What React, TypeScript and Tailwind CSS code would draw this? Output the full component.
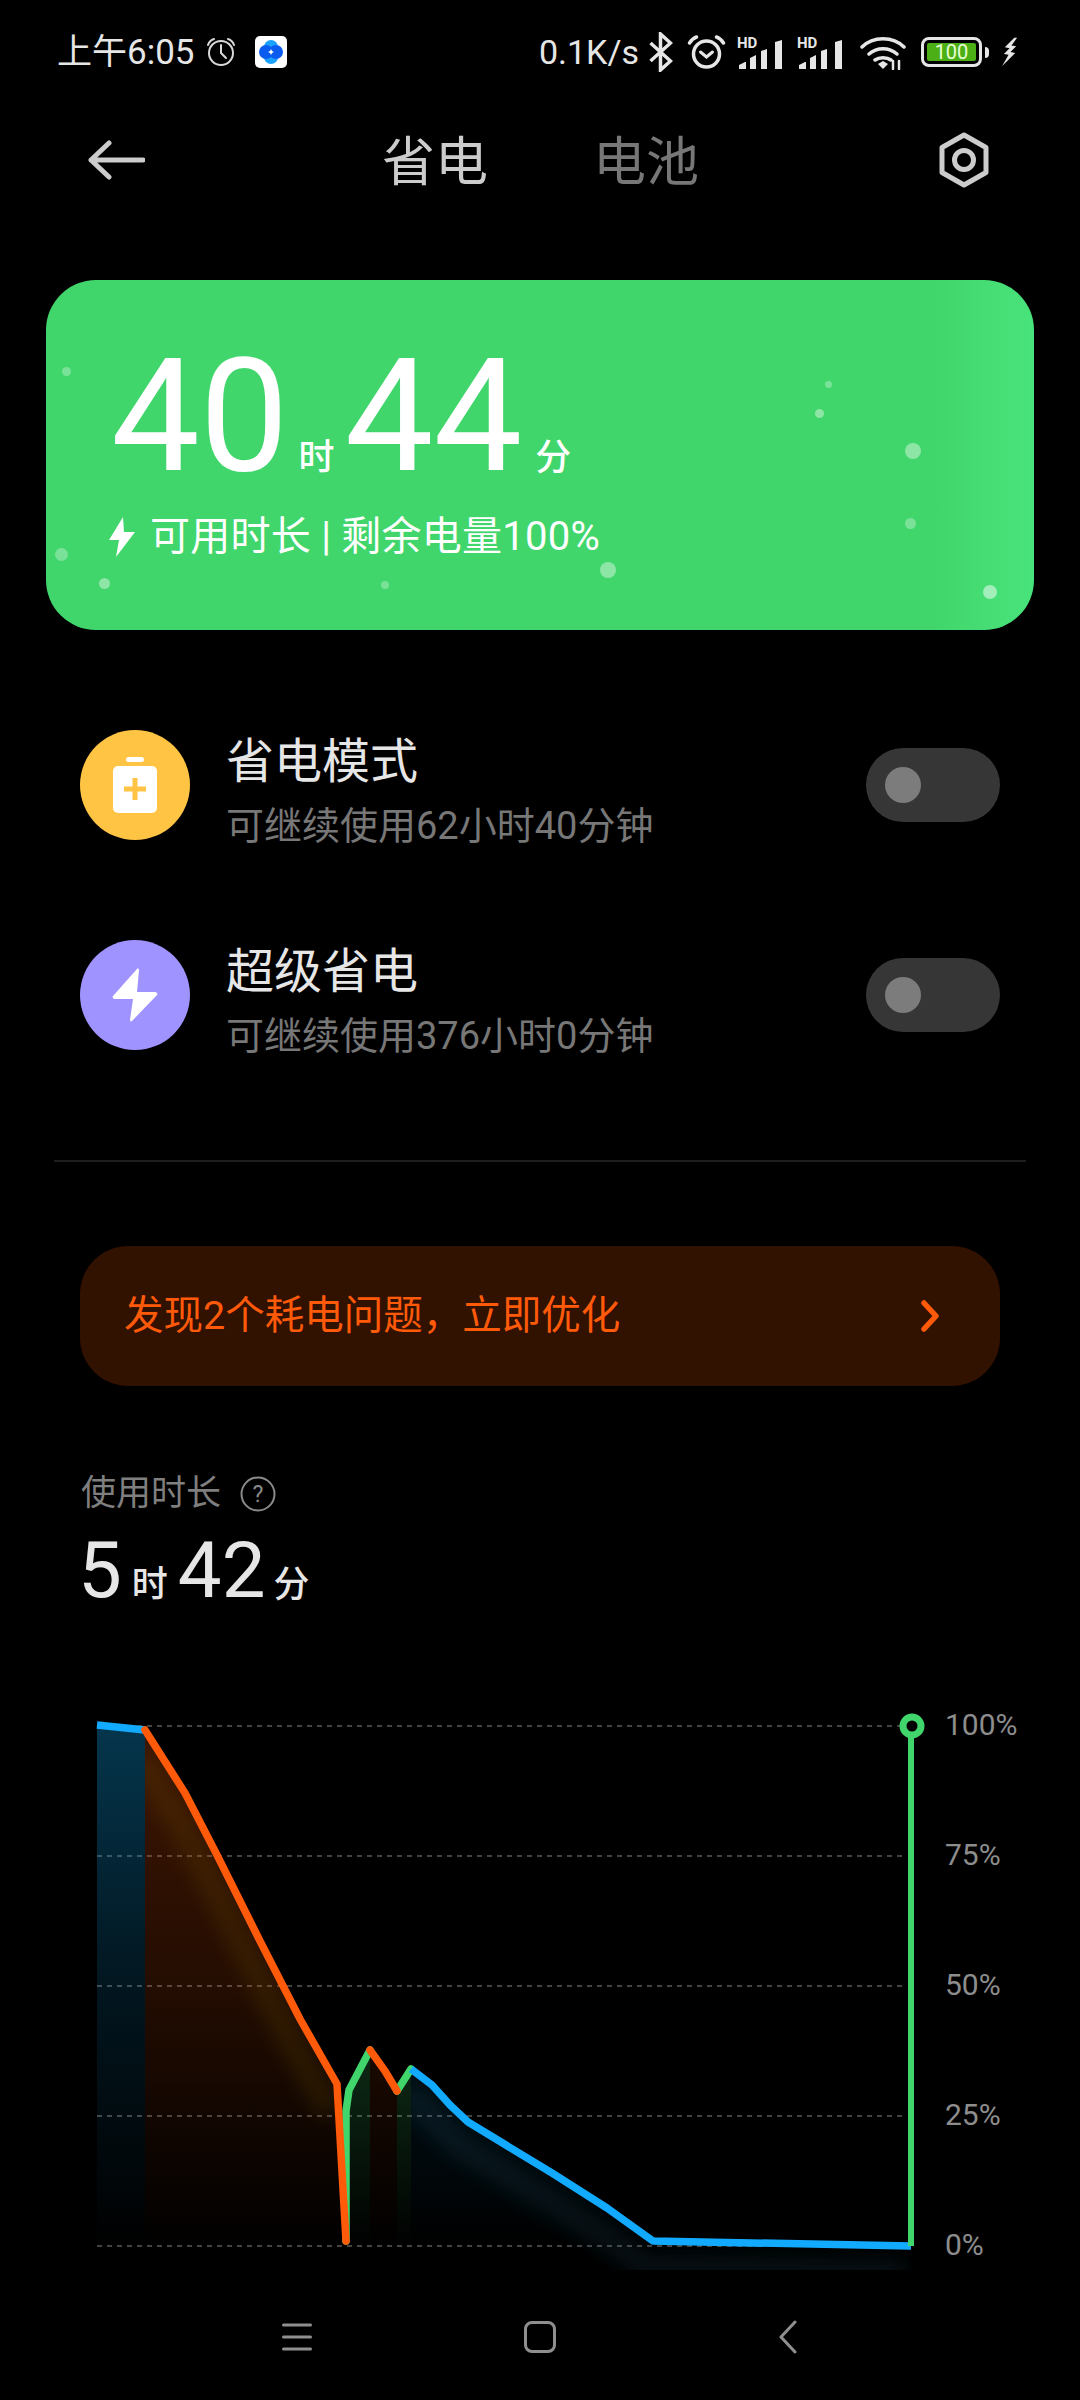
type Point = [number, number];

const blueA: Point[] = [[97, 1725], [145, 1730]];
const orangeA: Point[] = [[145, 1730], [185, 1793], [217, 1855], [260, 1941], [300, 2019], [337, 2084], [346, 2241]];
const greenA: Point[] = [[346, 2241], [346, 2111], [349, 2090], [370, 2050]];
const orangeB: Point[] = [[370, 2050], [385, 2071], [397, 2091]];
const greenB: Point[] = [[397, 2091], [411, 2069]];
const blueB: Point[] = [[411, 2069], [432, 2085], [450, 2105], [468, 2122], [552, 2173], [607, 2208], [653, 2241], [911, 2246]];

const line = (pts: Point[]) => pts.map(([x, y], i) => `${i ? "L" : "M"}${x} ${y}`).join(" ");
const area = (pts: Point[]) =>
  `${line(pts)} L${pts[pts.length - 1][0]} 2270 L${pts[0][0]} 2270 Z`;

const dots = [
  { x: 66, y: 371, d: 9, o: "opacity-30" },
  { x: 828, y: 384, d: 7, o: "opacity-30" },
  { x: 819, y: 413, d: 9, o: "opacity-40" },
  { x: 913, y: 451, d: 16, o: "opacity-40" },
  { x: 910, y: 523, d: 11, o: "opacity-30" },
  { x: 61, y: 554, d: 13, o: "opacity-30" },
  { x: 104, y: 583, d: 11, o: "opacity-40" },
  { x: 385, y: 585, d: 8, o: "opacity-30" },
  { x: 608, y: 570, d: 16, o: "opacity-40" },
  { x: 990, y: 592, d: 14, o: "opacity-50" },
];

function Signal() {
  return (
    <svg width="50" height="38" viewBox="0 0 50 38">
      <text x="0" y="15" fontSize="15" fontWeight="700" fill="#e6e6e6" fontFamily="Roboto">HD</text>
      <path d="M2 36v-4l6-3h1v7zM13 36V25l6-3v14zM24 36V18l6-2v20zM38 36V9l7-2v29z" fill="#e6e6e6" />
    </svg>
  );
}

function Chart() {
  return (
    <svg width="930" height="640" viewBox="0 1660 930 640" className="shrink-0">
      <defs>
        <linearGradient id="blueFill" gradientUnits="userSpaceOnUse" x1="0" y1="1725" x2="0" y2="2250">
          <stop offset="0" stopColor="#0fa8f0" stopOpacity="0.32" />
          <stop offset="0.5" stopColor="#0fa8f0" stopOpacity="0.13" />
          <stop offset="1" stopColor="#0fa8f0" stopOpacity="0" />
        </linearGradient>
        <linearGradient id="orangeFill" gradientUnits="userSpaceOnUse" x1="0" y1="1725" x2="0" y2="2250">
          <stop offset="0" stopColor="#ff5a0a" stopOpacity="0.24" />
          <stop offset="0.5" stopColor="#ff5a0a" stopOpacity="0.14" />
          <stop offset="1" stopColor="#ff5a0a" stopOpacity="0" />
        </linearGradient>
        <linearGradient id="greenFill" gradientUnits="userSpaceOnUse" x1="0" y1="2050" x2="0" y2="2250">
          <stop offset="0" stopColor="#41d66c" stopOpacity="0.2" />
          <stop offset="1" stopColor="#41d66c" stopOpacity="0" />
        </linearGradient>
        <filter id="soft" x="-20%" y="-20%" width="140%" height="140%">
          <feGaussianBlur stdDeviation="9" />
        </filter>
        <clipPath id="underOrange"><path d={area(orangeA)} /></clipPath>
        <clipPath id="underBlue"><path d={area(blueB)} /></clipPath>
      </defs>

      {[1726, 1856, 1986, 2116, 2246].map((y) => (
        <line key={y} x1="97" x2="905" y1={y} y2={y} stroke="#5a5a5a" strokeWidth="1.5" strokeDasharray="5 5" />
      ))}

      <path d={area(blueA)} fill="url(#blueFill)" />
      <path d={area(orangeA)} fill="url(#orangeFill)" />
      <path d={area(greenA)} fill="url(#greenFill)" />
      <path d={area(orangeB)} fill="url(#orangeFill)" />
      <path d={area(greenB)} fill="url(#greenFill)" />
      <path d={area(blueB)} fill="url(#blueFill)" />

      <g clipPath="url(#underOrange)">
        <path d={line(orangeA.slice(0, 6))} transform="translate(-6 28)" fill="none" stroke="#8a6a10" strokeOpacity="0.16" strokeWidth="26" filter="url(#soft)" />
      </g>
      <g clipPath="url(#underBlue)">
        <path d={line(blueB)} transform="translate(-6 26)" fill="none" stroke="#2a7a9a" strokeOpacity="0.12" strokeWidth="26" filter="url(#soft)" />
      </g>
      <path d="M346 2130 L346 2262" stroke="#41d66c" strokeOpacity="0.3" strokeWidth="20" filter="url(#soft)" />

      <g fill="none" strokeWidth="7.5" strokeLinejoin="round" strokeLinecap="round">
        <path d={line(blueA)} stroke="#12aaff" strokeLinecap="butt" />
        <path d={line(greenA)} stroke="#41d66c" />
        <path d={line(orangeA)} stroke="#ff5a0a" />
        <path d={line(greenB)} stroke="#41d66c" />
        <path d={line(orangeB)} stroke="#ff5a0a" />
        <path d={line(blueB)} stroke="#12aaff" strokeLinecap="butt" />
      </g>
      <path d="M911 1735 L911 2246" stroke="#41d66c" strokeWidth="6" />
      <circle cx="912" cy="1726" r="9" fill="#000" stroke="#41d66c" strokeWidth="7" />
    </svg>
  );
}

function Toggle() {
  return (
    <div className="ml-auto flex h-[74px] w-[134px] shrink-0 items-center rounded-full bg-[#363636] pl-[19px]">
      <div className="size-[36px] rounded-full bg-[#7c7c7c]" />
    </div>
  );
}

function Row({ title, sub, color, icon, className }: { title: string; sub: string; color: string; icon: React.ReactNode; className: string }) {
  return (
    <div className={`flex h-[110px] items-center pr-[80px] pl-[80px] ${className}`}>
      <div className={`flex size-[110px] shrink-0 items-center justify-center rounded-full ${color}`}>{icon}</div>
      <div className="mt-[13px] ml-[36px] flex flex-col">
        <span className="text-[48px] leading-[56px] text-[#e6e6e6]">{title}</span>
        <span className="mt-[13px] text-[38px] leading-[46px] text-[#777777]">{sub}</span>
      </div>
      <Toggle />
    </div>
  );
}

export default function App() {
  return (
    <div className="flex h-[2400px] w-[1080px] flex-col overflow-hidden bg-black font-[Roboto,'Noto_Sans_CJK_SC',sans-serif]">
      {/* Status bar */}
      <div className="flex h-[104px] items-center pr-[61px] pl-[57px] text-[#e6e6e6]">
        <span className="text-[35px] leading-none">上午6:05</span>
        <svg width="32" height="32" viewBox="0 0 32 32" className="ml-[10px]" fill="none" stroke="#d8d8d8" strokeWidth="2" strokeLinecap="round">
          <circle cx="16" cy="17" r="12" />
          <path d="M16 9v8l5 5M3 9c1-3 3-5 6-6M29 9c-1-3-3-5-6-6" />
        </svg>
        <div className="ml-[18px] flex size-[32px] items-center justify-center rounded-[5px] bg-white">
          <svg width="26" height="26" viewBox="0 0 26 26">
            <circle cx="13" cy="8" r="7" fill="#1aa0ff" />
            <circle cx="13" cy="18" r="7" fill="#1aa0ff" />
            <circle cx="8" cy="13" r="7" fill="#0a5cf0" />
            <circle cx="18" cy="13" r="7" fill="#0a5cf0" />
            <path d="M13 10l1 2 2 1-2 1-1 2-1-2-2-1 2-1z" fill="#fff" />
          </svg>
        </div>
        <span className="ml-auto text-[34px] leading-none">0.1K/s</span>
        <svg width="25" height="40" viewBox="0 0 24 40" className="ml-[9px]" fill="none" stroke="#e6e6e6" strokeWidth="3.5">
          <path d="M2 11l20 18-10 9V2l10 9L2 29" />
        </svg>
        <svg width="39" height="36" viewBox="0 0 38 36" className="ml-[14px]" fill="none" stroke="#e6e6e6" strokeWidth="3.5" strokeLinecap="round">
          <circle cx="19" cy="20" r="13" />
          <path d="M13 18l6 5 6-5" strokeWidth="3" />
          <path d="M2 9c2-3 4-5 7-6M36 9c-2-3-4-5-7-6" />
        </svg>
        <div className="ml-[11px]"><Signal /></div>
        <div className="ml-[10px]"><Signal /></div>
        <svg width="46" height="36" viewBox="0 0 46 36" className="ml-[13px]" fill="none" stroke="#e6e6e6" strokeWidth="3.5" strokeLinecap="round">
          <path d="M2 13C13 2 33 2 44 13M9 20c8-7 20-7 28 0M15 26c4-3 12-3 16 0" />
          <path d="M18 30l5-3 5 3-5 5z" fill="#e6e6e6" stroke="none" />
          <path d="M33 35v-8M39 35v-8" strokeWidth="2.5" />
        </svg>
        <div className="ml-[15px] flex h-[30px] w-[61px] items-center justify-center rounded-[8px] border-[3px] border-[#e6e6e6] p-[3px]">
          <div className="flex h-full w-full items-center justify-center rounded-[2px] bg-[#4caf15] text-[20px] leading-none text-[#e8ffd8]">100</div>
        </div>
        <div className="ml-[3px] h-[11px] w-[4px] rounded-r-full bg-[#e6e6e6]" />
        <svg width="17" height="30" viewBox="0 0 18 30" className="ml-[13px]" fill="#e6e6e6">
          <path d="M13 0L3 10l5 1-6 6 5 1L0 30l14-14-5-1 6-6-5-1 6-8z" />
        </svg>
      </div>

      {/* Header */}
      <div className="flex h-[112px] items-center pr-[91px] pl-[88px]">
        <svg width="57" height="40" viewBox="0 0 57 40" fill="none" stroke="#cccccc" strokeWidth="5" strokeLinecap="round" strokeLinejoin="round">
          <path d="M55 20H3M21 3L3 20l18 17" />
        </svg>
        <span className="mt-[8px] ml-[237px] text-[53px] text-[#cccccc]">省电</span>
        <span className="mt-[8px] ml-[105px] text-[53px] text-[#777777]">电池</span>
        <svg width="50" height="56" viewBox="0 0 50 56" className="ml-auto" fill="none" stroke="#cccccc" strokeWidth="5" strokeLinejoin="round">
          <path d="M25 3l22 12.500v25L25 53 3 40.500v-25z" />
          <circle cx="25" cy="28" r="9.500" />
        </svg>
      </div>

      {/* Time left card */}
      <div className="relative mx-[46px] mt-[64px] h-[350px] overflow-hidden rounded-[50px] bg-gradient-to-r from-[#41d66c] from-90% to-[#49e37b] pt-[61px] pl-[65px] text-white">
        {dots.map((dot) => (
          <div
            key={`${dot.x}-${dot.y}`}
            className={`absolute rounded-full bg-white ${dot.o}`}
            style={{ left: dot.x - 46 - dot.d / 2, top: dot.y - 280 - dot.d / 2, width: dot.d, height: dot.d }}
          />
        ))}
        <div className="flex items-baseline">
          <span className="text-[158px] leading-[150px]">40</span>
          <span className="ml-[10px] text-[36px] leading-none font-medium">时</span>
          <span className="ml-[10px] text-[158px] leading-[150px]">44</span>
          <span className="ml-[13px] text-[36px] leading-none font-medium">分</span>
        </div>
        <div className="mt-[23px] -ml-[3px] flex items-center">
          <svg width="28" height="40" viewBox="0 0 28 40" fill="#ffffff">
            <path d="M15 0L1 23h10L8 40l19-25H16z" />
          </svg>
          <span className="ml-[14px] text-[40px] leading-[46px] tracking-[0.25px]">可用时长 | 剩余电量100%</span>
        </div>
      </div>

      {/* Modes */}
      <Row
        className="mt-[100px]"
        title="省电模式"
        sub="可继续使用62小时40分钟"
        color="bg-[#ffc444]"
        icon={
          <svg width="44" height="56" viewBox="0 0 44 56">
            <rect x="13" y="0" width="18" height="5" rx="2.500" fill="#fff" />
            <rect x="0" y="9" width="44" height="47" rx="5" fill="#fff" />
            <path d="M22 21v22M11 32h22" stroke="#ffc444" strokeWidth="5" />
          </svg>
        }
      />
      <Row
        className="mt-[100px]"
        title="超级省电"
        sub="可继续使用376小时0分钟"
        color="bg-[#9f94ff]"
        icon={
          <svg width="46" height="54" viewBox="0 0 46 54" fill="#fff">
            <path d="M25 1c1-1 2 0 2 1l-2 22h18c2 0 3 2 2 3L20 53c-1 1-2 0-2-1l3-21H3c-2 0-3-2-2-3z" />
          </svg>
        }
      />

      <div className="mx-[54px] mt-[110px] h-[1.500px] bg-[#1e1e1e]" />

      {/* Optimize banner */}
      <div className="mx-[80px] mt-[84px] flex h-[140px] items-center justify-between rounded-[48px] bg-[#311100] pr-[60px] pl-[44px] text-[#ff5a0a]">
        <span className="text-[39.5px]">发现2个耗电问题，立即优化</span>
        <svg width="20" height="32" viewBox="0 0 20 32" fill="none" stroke="#ff5a0a" strokeWidth="5.500" strokeLinecap="round" strokeLinejoin="round">
          <path d="M4 3l12 13L4 29" />
        </svg>
      </div>

      {/* Usage */}
      <div className="mt-[87px] flex items-center pl-[81px]">
        <span className="text-[35px] leading-[42px] text-[#7f7f7f]">使用时长</span>
        <svg width="36" height="36" viewBox="0 0 36 36" className="ml-[19px]">
          <circle cx="18" cy="18" r="16.500" fill="none" stroke="#8a8a8a" strokeWidth="2" />
          <text x="18" y="26" fontSize="23" textAnchor="middle" fill="#8a8a8a" fontFamily="Roboto">?</text>
        </svg>
      </div>
      <div className="mt-[17px] flex items-baseline pl-[78px] text-[#e6e6e6]">
        <span className="text-[78px] leading-[78px] font-[450]">5</span>
        <span className="ml-[10px] text-[36px] leading-none font-medium">时</span>
        <span className="ml-[10px] text-[78px] leading-[78px] font-[450]">42</span>
        <span className="ml-[8px] text-[36px] leading-none font-medium">分</span>
      </div>

      {/* Chart */}
      <div className="mt-[50px] flex">
        <Chart />
        <div className="ml-[15px] flex flex-col">
          {["100%", "75%", "50%", "25%", "0%"].map((label) => (
            <div key={label} className="flex h-[130px] items-center text-[30px] text-[#8d8d8d]">{label}</div>
          ))}
        </div>
      </div>

      {/* Nav bar */}
      <div className="flex flex-1 items-center pb-[36px] pl-[282px]">
        <svg width="30" height="28" viewBox="0 0 30 28" stroke="#8f8f8f" strokeWidth="3" strokeLinecap="round">
          <path d="M1.500 2h27M1.500 14h27M1.500 26h27" />
        </svg>
        <div className="ml-[212px] size-[32px] rounded-[8px] border-[3px] border-[#8f8f8f]" />
        <svg width="18" height="34" viewBox="0 0 18 34" className="ml-[223px]" fill="none" stroke="#8f8f8f" strokeWidth="3" strokeLinecap="round" strokeLinejoin="round">
          <path d="M16 2L2 17l14 15" />
        </svg>
      </div>
    </div>
  );
}
